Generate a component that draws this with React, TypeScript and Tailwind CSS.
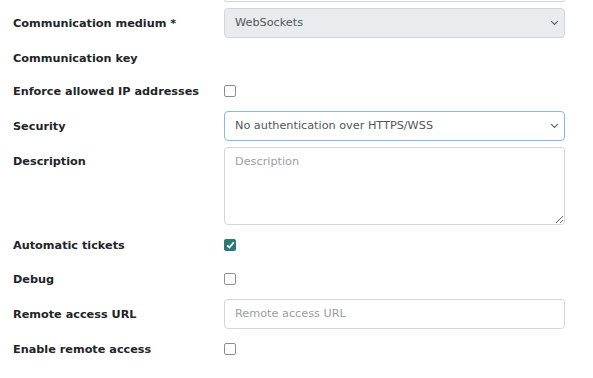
import React from "react"

const font = { fontFamily: '"DejaVu Sans", sans-serif' }

function Chevron() {
  return (
    <svg width="9" height="6" viewBox="0 0 9 6" className="text-[#5a6067]">
      <path d="M1.2 1.2l3.3 3.3 3.3-3.3" fill="none" stroke="currentColor" strokeWidth="1.2" />
    </svg>
  )
}

function Box({ checked = false }: { checked?: boolean }) {
  if (checked)
    return (
      <span className="flex h-[12px] w-[12px] items-center justify-center rounded-[2px] bg-[#2b7a78]">
        <svg width="9" height="8" viewBox="0 0 9 8">
          <path d="M1.2 4.3l2.2 2.2L7.8 1.3" fill="none" stroke="white" strokeWidth="1.8" />
        </svg>
      </span>
    )
  return <span className="block h-[12px] w-[12px] rounded-[2px] border border-[#8e8e98] bg-white" />
}

function Label({ children, top = false }: { children: React.ReactNode; top?: boolean }) {
  return (
    <div className={"w-[211px] shrink-0 text-[11.25px] font-bold text-[#212529] " + (top ? "pt-[7px]" : "pt-[2px]")}>
      {children}
    </div>
  )
}

function Select({ value, disabled = false, focus = false }: { value: string; disabled?: boolean; focus?: boolean }) {
  return (
    <div
      className={
        "flex h-[30px] w-[341px] items-center justify-between rounded-[4px] border pl-[10px] pr-[5px] text-[11.25px] text-[#50565c] " +
        (disabled ? "border-[#d3d7dc] bg-[#e9ecef]" : "") +
        (focus ? "border-[#86b7fe] bg-white" : "")
      }
    >
      <span>{value}</span>
      <Chevron />
    </div>
  )
}

export default function App() {
  return (
    <div className="min-h-[378px] bg-white pl-[13px]" style={font}>
      <div className="flex">
        <div className="w-[211px]" />
        <div className="h-[2px] w-[341px] rounded-b-[4px] border-x border-b border-[#d3d7dc]" />
      </div>

      <div className="mt-[6px] flex h-[30px] items-center">
        <Label>Communication medium *</Label>
        <Select value="WebSockets" disabled />
      </div>

      <div className="mt-[6px] flex h-[28px] items-center">
        <Label>Communication key</Label>
      </div>

      <div className="mt-[8px] flex h-[22px] items-center">
        <Label>Enforce allowed IP addresses</Label>
        <Box />
      </div>

      <div className="mt-[9px] flex h-[30px] items-center">
        <Label>Security</Label>
        <Select value="No authentication over HTTPS/WSS" focus />
      </div>

      <div className="mt-[6px] flex items-start">
        <Label top>Description</Label>
        <textarea
          placeholder="Description"
          className="h-[78px] w-[341px] rounded-[4px] border border-[#d3d7dc] px-[10px] py-[6px] text-[11.25px] text-[#50565c] outline-none placeholder:text-[#9b9ea3]"
        />
      </div>

      <div className="mt-[9px] flex h-[22px] items-center">
        <Label>Automatic tickets</Label>
        <Box checked />
      </div>

      <div className="mt-[12px] flex h-[22px] items-center">
        <Label>Debug</Label>
        <Box />
      </div>

      <div className="mt-[9px] flex h-[30px] items-center">
        <Label>Remote access URL</Label>
        <div className="flex h-[30px] w-[341px] items-center rounded-[4px] border border-[#d3d7dc] pl-[10px] text-[11.25px] text-[#9b9ea3]">
          Remote access URL
        </div>
      </div>

      <div className="mt-[9px] flex h-[22px] items-center">
        <Label>Enable remote access</Label>
        <Box />
      </div>
    </div>
  )
}
